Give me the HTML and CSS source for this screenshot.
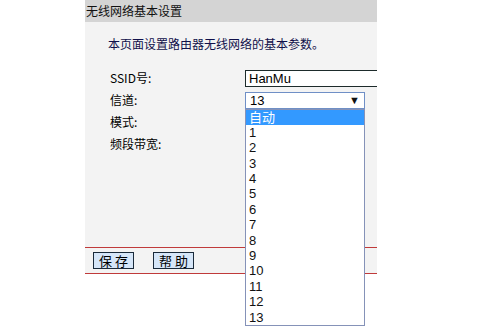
FILE: index.html
```html
<!DOCTYPE html>
<html lang="zh-CN">
<head>
  <meta charset="UTF-8">
  <title>无线网络基本设置</title>
  <link rel="stylesheet" href="styles.css">
</head>
<body>
  <div class="panel">
    <div class="panel-title">无线网络基本设置</div>
    <p class="intro">本页面设置路由器无线网络的基本参数。</p>

    <div class="form">
      <div class="label">SSID号:</div>
      <div class="field clip">
        <div class="text-input">HanMu</div>
      </div>

      <div class="label">信道:</div>
      <div class="field">
        <div class="select">
          <span>13</span>
          <span class="arrow">▼</span>
          <ul class="options">
            <li class="selected">自动</li>
            <li>1</li>
            <li>2</li>
            <li>3</li>
            <li>4</li>
            <li>5</li>
            <li>6</li>
            <li>7</li>
            <li>8</li>
            <li>9</li>
            <li>10</li>
            <li>11</li>
            <li>12</li>
            <li>13</li>
          </ul>
        </div>
      </div>

      <div class="label">模式:</div>
      <div class="field"></div>

      <div class="label">频段带宽:</div>
      <div class="field"></div>
    </div>

    <div class="actions">
      <button class="btn">保 存</button>
      <button class="btn">帮 助</button>
    </div>
  </div>
</body>
</html>
```

FILE: styles.css
```css
* {
  margin: 0;
  padding: 0;
  box-sizing: border-box;
}

html, body {
  height: 100%;
}

body {
  background: #fff;
  font-family: "Noto Sans CJK SC", "Liberation Sans", sans-serif;
  font-size: 12px;
  color: #000;
}

.panel {
  width: 292px;
  margin-left: 85px;
  background: #f3f3f3;
}

.panel-title {
  height: 22px;
  line-height: 22px;
  padding-left: 1px;
  background: #d4d4d4;
  font-size: 12px;
  color: #111;
}

.intro {
  margin: 14px 0 0 23px;
  line-height: 16px;
  color: #10104a;
}

.form {
  display: grid;
  grid-template-columns: 160px 132px;
  grid-auto-rows: 22px;
  margin-top: 15px;
}

.label {
  padding-left: 25px;
  line-height: 22px;
}

.field {
  display: flex;
  align-items: center;
  position: relative;
}

.clip {
  overflow: hidden;
}

.text-input {
  flex: none;
  width: 160px;
  height: 17px;
  border: 1px solid #1d2b2b;
  background: #fff;
  padding-left: 3px;
  font-family: "Liberation Sans", sans-serif;
  font-size: 13px;
  line-height: 15px;
}

.select {
  position: relative;
  width: 120px;
  height: 17px;
  border: 1px solid #6f8fc6;
  background: #fff;
  display: flex;
  justify-content: space-between;
  align-items: center;
  padding: 0 4px 0 4px;
  font-family: "Liberation Sans", sans-serif;
  font-size: 13px;
}

.arrow {
  font-size: 11px;
  color: #111;
}

.options {
  position: absolute;
  top: 16px;
  left: -1px;
  width: 120px;
  list-style: none;
  background: #fff;
  border: 1px solid #8592b8;
  z-index: 2;
}

.options li {
  height: 15.4px;
  line-height: 15.4px;
  padding-left: 3px;
  font-family: "Liberation Sans", "Noto Sans CJK SC", sans-serif;
  font-size: 13px;
  color: #111;
}

.options .selected {
  background: #3399ff;
  color: #fff;
}

.actions {
  margin-top: 92px;
  border-top: 1px solid #c03a3a;
  border-bottom: 1px solid #c03a3a;
  padding: 4px 8px;
  display: flex;
  gap: 19px;
}

.btn {
  width: 41px;
  height: 17px;
  border: 1px solid #1a2a3a;
  background: #d6e6f8;
  font-family: "Noto Sans CJK SC", sans-serif;
  font-size: 13px;
  line-height: 15px;
  color: #000;
}
```
